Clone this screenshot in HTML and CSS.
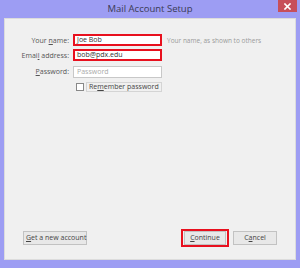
FILE: index.html
```html
<!DOCTYPE html>
<html lang="en">
<head>
    <meta charset="UTF-8">
    <meta name="viewport" content="width=device-width, initial-scale=1.0">
    <title>Mail Account Setup</title>
    <link rel="stylesheet" href="styles.css">
</head>
<body>
    <div class="window">
        <div class="titlebar">
            <span class="title">Mail Account Setup</span>
            <button class="close-btn" aria-label="Close">
                <svg width="7" height="7" viewBox="0 0 7 7"><path d="M1 1L6 6M6 1L1 6" stroke="#fff" stroke-width="1.6" stroke-linecap="square"/></svg>
            </button>
        </div>
        <div class="content">
            <div class="form">
                <label class="label">Your <u>n</u>ame:</label>
                <div class="field marked">Joe Bob</div>
                <span class="hint">Your name, as shown to others</span>

                <label class="label">Emai<u>l</u> address:</label>
                <div class="field marked">bob@pdx.edu</div>
                <span></span>

                <label class="label"><u>P</u>assword:</label>
                <div class="field placeholder">Password</div>
                <span></span>

                <span></span>
                <div class="remember">
                    <span class="checkbox"></span>
                    <span class="remember-text">Re<u>m</u>ember password</span>
                </div>
                <span></span>
            </div>
            <div class="spacer"></div>
            <div class="actions">
                <button class="btn btn-new"><u>G</u>et a new account</button>
                <div class="actions-right">
                    <span class="mark"><button class="btn btn-continue"><u>C</u>ontinue</button></span>
                    <button class="btn btn-cancel">C<u>a</u>ncel</button>
                </div>
            </div>
        </div>
    </div>
</body>
</html>
```

FILE: styles.css
```css
html, body {
    margin: 0;
    padding: 0;
}

body {
    width: 300px;
    height: 268px;
    font-family: "Open Sans", "Noto Sans", sans-serif;
    font-size: 7px;
    color: #444;
    overflow: hidden;
}

.window {
    height: 100%;
    box-sizing: border-box;
    background-color: #9d9df3;
    padding: 0 4px 8px 4px;
    display: flex;
    flex-direction: column;
}

.titlebar {
    height: 18px;
    position: relative;
    display: flex;
    justify-content: center;
    align-items: center;
}

.title {
    font-size: 9.5px;
    color: #3a3a55;
    margin-top: -1px;
}

.close-btn {
    position: absolute;
    top: 0;
    right: -1px;
    width: 19px;
    height: 12px;
    padding: 0;
    border: none;
    background-color: #c74f5a;
    display: flex;
    justify-content: center;
    align-items: center;
}

.content {
    flex: 1;
    background-color: #f0f0f0;
    border: 1px solid #dcdcdc;
    display: flex;
    flex-direction: column;
}

.form {
    display: grid;
    grid-template-columns: 64px 89px 1fr;
    column-gap: 4px;
    row-gap: 3px;
    padding-top: 15px;
    align-items: center;
}

.label {
    text-align: right;
    color: #555;
    white-space: nowrap;
}

.field {
    height: 12px;
    box-sizing: border-box;
    background-color: #fff;
    border: 1px solid #c8c8c8;
    padding-left: 3px;
    line-height: 10px;
    color: #333;
}

.field.marked {
    border: 2px solid #e8101e;
    line-height: 8px;
    padding-left: 2px;
}

.field.placeholder {
    color: #aaa;
    margin-top: 2px;
}

.hint {
    color: #9a9a9a;
    font-size: 6.5px;
    padding-left: 1px;
    white-space: nowrap;
}

.remember {
    display: flex;
    align-items: center;
    gap: 2px;
    margin-top: 1px;
    padding-left: 3px;
}

.checkbox {
    width: 6px;
    height: 6px;
    border: 1px solid #888;
    background-color: #fff;
    flex-shrink: 0;
}

.remember-text {
    flex: 1;
    height: 10px;
    line-height: 8px;
    box-sizing: border-box;
    border: 1px solid #d4d4d4;
    padding-left: 2px;
    color: #444;
    white-space: nowrap;
    overflow: hidden;
}

.spacer {
    flex: 1;
}

.actions {
    display: flex;
    justify-content: space-between;
    align-items: center;
    padding: 0 18px 12px 18px;
}

.actions-right {
    display: flex;
    align-items: center;
    gap: 4px;
}

.btn {
    font-family: inherit;
    font-size: 7px;
    color: #444;
    height: 14px;
    padding: 0 2px;
    background-color: #e8e8e8;
    border: 1px solid #c2c2c2;
    line-height: 12px;
    white-space: nowrap;
}

.btn-new {
    width: 64px;
}

.mark {
    display: flex;
    border: 2px solid #e8101e;
    padding: 0 1px;
}

.btn-continue {
    width: 42px;
}

.btn-cancel {
    width: 44px;
}
```
